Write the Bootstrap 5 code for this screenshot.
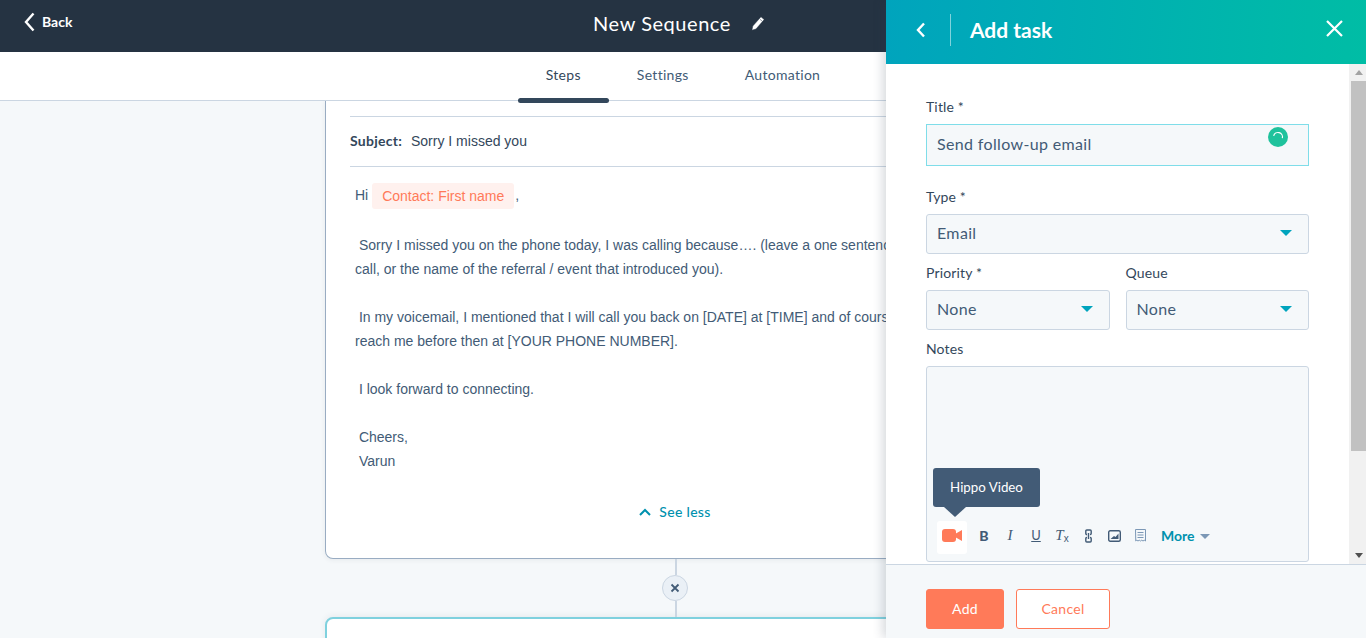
<!DOCTYPE html>
<html lang="en">
<head>
<meta charset="utf-8">
<title>New Sequence</title>
<link href="https://cdn.jsdelivr.net/npm/bootstrap@5.3.0/dist/css/bootstrap.min.css" rel="stylesheet">
<style>
html,body{height:638px;overflow:hidden}
body{font-family:Lato,"Liberation Sans",sans-serif;color:#33475b;background:#f5f8fa;font-size:14px}
.shell{height:638px;position:relative;overflow:hidden}
.topbar{height:52px;background:#253342;color:#fff}
.topbar .side{flex:1 1 0;padding-left:24px}
.back-link{font-size:14px;font-weight:700;color:#fff;gap:7px;margin-top:-4px}
.seq-title{font-size:20px;letter-spacing:.55px;color:#fff;margin:-6px 0 0 -8px}
.seq-pen{margin:-6px 0 0 20px}
.tabbar{height:49px;background:#fff;border-bottom:1px solid #cbd6e2}
.tabitem{height:49px;padding:0 28px;color:#425b76;font-size:14px;letter-spacing:.3px;position:relative;line-height:46px}
.tabitem.on{color:#33475b}
.tabitem.on::after{content:"";position:absolute;left:0;right:0;top:46px;height:5px;border-radius:3px;background:#33475b}
.stage{height:537px;overflow:hidden;padding-left:325px}
.mail-card{width:700px;height:458px;background:#fff;border:1px solid #99acc2;border-top:0;border-radius:0 0 8px 8px;padding:15px 24px 0;box-shadow:0 1px 5px rgba(45,62,80,.08)}
.subject-row{height:51px;border-top:1px solid #cbd6e2;border-bottom:1px solid #cbd6e2;font-family:"Liberation Sans",sans-serif;color:#33475b}
.subject-row b{font-family:Lato,sans-serif;font-size:14px;margin:-2px 9px 0 0;letter-spacing:.25px;color:#33475b}
.mail-body{font-family:"Liberation Sans",sans-serif;font-size:14px;line-height:24px;color:#425b76;padding:16px 0 0 5px;white-space:nowrap}
.mail-body p{margin:0 0 24px}
.chip{display:inline-block;background:#fff1ee;color:#ff7a59;border-radius:3px;line-height:26px;height:26px;padding:0 10px;margin-right:1px;vertical-align:-1px}
.see-less{color:#0091ae;font-weight:500;font-size:14px;letter-spacing:.3px;gap:8px;margin-top:28px}
.joint{width:700px;height:58px}
.joint i{display:block;width:2px;background:#cbd6e2;flex:1;margin-left:1px}
.joint span{width:26px;height:26px;border-radius:50%;background:#eaf0f6;border:1px solid #cbd6e2}
.next-card{width:700px;height:120px;background:#fff;border:2px solid #7fd1de;border-radius:8px 8px 0 0;box-shadow:0 -1px 6px rgba(45,62,80,.08)}
.drawer{position:absolute;top:0;right:0;width:480px;height:638px;background:#fff;box-shadow:-3px 0 10px rgba(45,62,80,.2)}
.drawer-head{height:64px;background:linear-gradient(93deg,#00a4bd,#00bda5);color:#fff;padding-bottom:4px}
.drawer-back{width:65px;height:32px;border-right:1px solid rgba(255,255,255,.5);padding-left:6px}
.drawer-title{font-size:21px;font-weight:700;margin-left:19px}
.drawer-close{margin:-4px 23px 0 auto}
.drawer-main{height:500px}
.form-pane{width:463px;padding:32px 40px 2px;overflow:hidden}
.fake-scroll{width:17px;background:#f1f1f1;padding-left:2px}
.fake-thumb{height:370px;background:#c1c1c1;margin-top:0}
.arrow-zone{height:17px}
.lbl{display:block;font-size:14px;line-height:22px;color:#33475b;margin:0 0 6px;letter-spacing:.15px}
.field{height:40px;background:#f5f8fa;border:1px solid #cbd6e2;border-radius:3px;padding:0 10px 2px;font-size:16px;letter-spacing:.35px;color:#425b76}
.field.focus{height:42px;border-color:#7fdde9;border-radius:0;position:relative;margin-bottom:20px}
.spinner-dot{position:absolute;right:20px;top:2px}
.caret-t{width:0;height:0;border-left:6px solid transparent;border-right:6px solid transparent;border-top:6px solid #00a4bd;margin-right:6px}
.notes{height:196px;background:#f5f8fa;border:1px solid #cbd6e2;border-radius:3px;position:relative;padding:0 10px 7px 10px}
.tip{position:absolute;left:6px;top:101px;width:107px;height:39px;background:#425b76;color:#fff;border-radius:3px;font-size:13.3px;line-height:39px;text-align:center}
.tip::after{content:"";position:absolute;left:11px;top:39px;border-left:11px solid transparent;border-right:11px solid transparent;border-top:10px solid #425b76}
.cam-box{width:30px;height:33px;background:#fff;border-radius:3px;padding-bottom:4px}
.tool-row{margin-bottom:2px}
.tool{width:26px;height:33px;color:#425b76;font-size:14px;line-height:1}
.tool.bold{font-weight:900}
.tool.ital{font-family:"Liberation Serif",serif;font-style:italic;font-size:15px}
.tool.und{text-decoration:underline;font-weight:400;font-size:13px}
.tool sub{font-size:10px;bottom:-.35em;font-style:normal;font-family:"Liberation Sans",sans-serif}
.more-btn{color:#0091ae;font-weight:700;font-size:14px;margin:-1px 0 0 8px;gap:5px}
.more-caret{border-left:5px solid transparent;border-right:5px solid transparent;border-top:5px solid #7c98b6;margin-top:2px}
.drawer-foot{height:74px;background:#f5f8fa;border-top:1px solid #cbd6e2;padding:24px 40px;gap:12px}
.btn-go,.btn-no{height:40px;border-radius:3px;font-size:14px;padding:0 0 2px;letter-spacing:.3px}
.btn-go{width:78px;background:#ff7a59;border:1px solid #ff7a59;color:#fff}
.btn-no{width:94px;background:#fff;border:1px solid #ff7a59;color:#ff7a59}
</style>
</head>
<body>
<div class="shell">
  <header class="topbar d-flex align-items-center">
    <div class="side">
      <a class="back-link d-inline-flex align-items-center text-decoration-none" href="#">
        <svg width="11" height="20" viewBox="0 0 11 20"><path d="M9.5 1.500 2 10l7.500 8.500" fill="none" stroke="#fff" stroke-width="2.400"/></svg>Back</a>
    </div>
    <div class="d-flex align-items-center">
      <span class="seq-title">New Sequence</span>
      <svg class="seq-pen" width="14" height="15" viewBox="0 0 14 15"><path d="M10 .8 13.200 3.600 5 13 .9 14.200 1.800 10zM9 3.300l2.300 2" fill="#fff" stroke="#253342" stroke-width=".5"/></svg>
    </div>
    <div class="side"></div>
  </header>
  <nav class="tabbar d-flex justify-content-center">
    <div class="tabitem on">Steps</div>
    <div class="tabitem">Settings</div>
    <div class="tabitem">Automation</div>
  </nav>
  <main class="stage">
    <div class="mail-card">
      <div class="subject-row d-flex align-items-center"><b>Subject:</b>Sorry I missed you</div>
      <div class="mail-body">
        <p>Hi <span class="chip">Contact: First name</span>,</p>
        <p>&nbsp;Sorry I missed you on the phone today, I was calling because…. (leave a one sentence<br>call, or the name of the referral / event that introduced you).</p>
        <p>&nbsp;In my voicemail, I mentioned that I will call you back on [DATE] at [TIME] and of course<br>reach me before then at [YOUR PHONE NUMBER].</p>
        <p>&nbsp;I look forward to connecting.</p>
        <p class="mb-0">&nbsp;Cheers,<br>&nbsp;Varun</p>
      </div>
      <div class="see-less d-flex justify-content-center align-items-center">
        <svg width="12" height="8" viewBox="0 0 12 8"><path d="M1 7 6 2l5 5" fill="none" stroke="#0091ae" stroke-width="2"/></svg>See less</div>
    </div>
    <div class="joint d-flex flex-column align-items-center">
      <i></i>
      <span class="d-flex align-items-center justify-content-center"><svg width="10" height="10" viewBox="0 0 10 10"><path d="m1.500 1.500 7 7m0-7-7 7" stroke="#425b76" stroke-width="1.800"/></svg></span>
      <i></i>
    </div>
    <div class="next-card"></div>
  </main>

  <aside class="drawer d-flex flex-column">
    <div class="drawer-head d-flex align-items-center">
      <div class="drawer-back d-flex align-items-center justify-content-center">
        <svg width="10" height="16" viewBox="0 0 10 16"><path d="M8 1.500 2 8l6 6.500" fill="none" stroke="#fff" stroke-width="2.400"/></svg>
      </div>
      <div class="drawer-title">Add task</div>
      <svg class="drawer-close" width="17" height="17" viewBox="0 0 17 17"><path d="m1 1 15 15m0-15L1 16" stroke="#fff" stroke-width="2.200"/></svg>
    </div>
    <div class="drawer-main d-flex">
      <form class="form-pane">
        <label class="lbl">Title *</label>
        <div class="field focus d-flex align-items-center">Send follow-up email
          <svg class="spinner-dot" width="20" height="20" viewBox="0 0 20 20"><circle cx="10" cy="10" r="10" fill="#1fc29c"/><path d="M5.500 10a4.500 4.500 0 0 1 9 0" fill="none" stroke="#fff" stroke-width="1.200" transform="rotate(15 10 10)"/></svg>
        </div>
        <label class="lbl">Type *</label>
        <div class="field d-flex align-items-center justify-content-between mb-2"><span>Email</span><span class="caret-t"></span></div>
        <div class="row g-0 gap-3 flex-nowrap">
          <div class="col">
            <label class="lbl">Priority *</label>
            <div class="field d-flex align-items-center justify-content-between"><span>None</span><span class="caret-t"></span></div>
          </div>
          <div class="col">
            <label class="lbl">Queue</label>
            <div class="field d-flex align-items-center justify-content-between"><span>None</span><span class="caret-t"></span></div>
          </div>
        </div>
        <label class="lbl mt-2">Notes</label>
        <div class="notes d-flex align-items-end">
          <div class="tip">Hippo Video</div>
          <div class="cam-box d-flex align-items-center justify-content-center">
            <svg width="20" height="13" viewBox="0 0 20 13"><rect width="14" height="13" rx="3" fill="#ff7a59"/><path d="M13 5 20 1v11l-7-4z" fill="#ff7a59"/></svg>
          </div>
          <div class="tool-row d-flex align-items-center ms-1">
            <span class="tool bold d-flex align-items-center justify-content-center">B</span>
            <span class="tool ital d-flex align-items-center justify-content-center">I</span>
            <span class="tool und d-flex align-items-center justify-content-center">U</span>
            <span class="tool ital d-flex align-items-center justify-content-center">T<sub>x</sub></span>
            <span class="tool d-flex align-items-center justify-content-center"><svg width="7" height="14" viewBox="0 0 7 14"><path d="M2 5.500h-.2a1 1 0 0 1-1-1v-2.500a1 1 0 0 1 1-1h3.400a1 1 0 0 1 1 1v2.500a1 1 0 0 1-1 1H5M2 8.500h-.2a1 1 0 0 0-1 1v2.500a1 1 0 0 0 1 1h3.400a1 1 0 0 0 1-1V9.500a1 1 0 0 0-1-1H5M3.500 4v6" fill="none" stroke="#425b76" stroke-width="1.400"/></svg></span>
            <span class="tool d-flex align-items-center justify-content-center"><svg width="13" height="12" viewBox="0 0 13 12"><rect x=".7" y=".7" width="11.600" height="10.600" rx="1.500" fill="none" stroke="#425b76" stroke-width="1.400"/><path d="M2.500 9 6 6l1.500 1L10.500 3.500V9z" fill="#425b76"/></svg></span>
            <span class="tool d-flex align-items-center justify-content-center"><svg width="11" height="13" viewBox="0 0 11 13"><path d="M.5.500h10v11.500l-1.250-.8-1.250.8-1.250-.8-1.250.8-1.250-.8-1.250.8-1.250-.8-1 .8zM2.500 3.500h6M2.500 6h6M2.500 8.500h6" fill="none" stroke="#7c98b6" stroke-width="1"/></svg></span>
            <span class="more-btn d-flex align-items-center">More<span class="more-caret"></span></span>
          </div>
        </div>
      </form>
      <div class="fake-scroll d-flex flex-column">
        <div class="arrow-zone d-flex align-items-center justify-content-center"><svg width="8" height="5" viewBox="0 0 8 5"><path d="M4 0 8 5H0z" fill="#a3a3a3"/></svg></div>
        <div class="fake-thumb"></div>
        <div class="arrow-zone d-flex align-items-center justify-content-center mt-auto"><svg width="8" height="5" viewBox="0 0 8 5"><path d="M4 5 8 0H0z" fill="#505050"/></svg></div>
      </div>
    </div>
    <div class="drawer-foot d-flex">
      <button type="button" class="btn btn-go">Add</button>
      <button type="button" class="btn btn-no">Cancel</button>
    </div>
  </aside>
</div>
<script src="https://cdn.jsdelivr.net/npm/bootstrap@5.3.0/dist/js/bootstrap.bundle.min.js"></script>
</body>
</html>
